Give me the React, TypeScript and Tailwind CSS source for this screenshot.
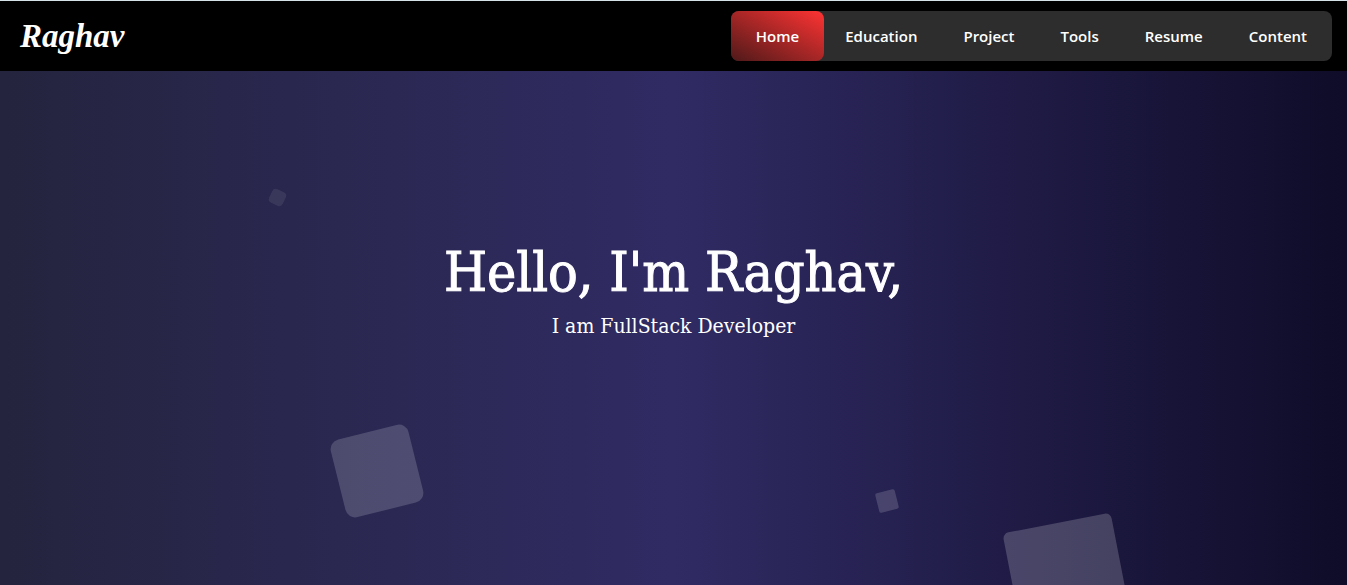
const links = ["Home", "Education", "Project", "Tools", "Resume", "Content"];

const squares = [
  "left-[270px] top-[119px] size-[15px] rotate-[25deg] rounded-[4px] bg-white/8",
  "left-[337px] top-[360px] size-20 -rotate-[14deg] rounded-[10px] bg-white/17",
  "left-[877px] top-[420px] size-5 -rotate-[14deg] rounded-[2px] bg-white/16",
  "left-[1012px] top-[451px] size-[110px] -rotate-[11deg] rounded-[6px] bg-white/19",
];

function Header() {
  return (
    <header className="flex h-[71px] shrink-0 items-center justify-between border-t border-[#d5e3e8] bg-black pr-[15px] pl-5">
      <a
        href="#home"
        className="font-['Liberation_Serif',cursive] text-[33px] leading-10 font-bold text-white italic"
      >
        Raghav
      </a>
      <nav
        aria-label="Main"
        className="flex h-[50px] -space-x-1 rounded-lg bg-[#2d2d2d] font-['Open_Sans',sans-serif] text-[15px] font-semibold text-white"
      >
        {links.map((label, i) => (
          <a
            key={label}
            href={`#${label.toLowerCase()}`}
            aria-current={i === 0 ? "page" : undefined}
            className={
              i === 0
                ? "flex items-center rounded-lg bg-linear-to-tr/srgb from-[#4f1919] to-[#ff3333] px-[25px]"
                : "flex items-center px-[25px]"
            }
          >
            {label}
          </a>
        ))}
      </nav>
    </header>
  );
}

export default function App() {
  return (
    <div className="flex min-h-screen flex-col">
      <Header />
      <main
        id="home"
        className="relative flex grow flex-col items-center overflow-hidden bg-linear-to-r/srgb from-[#24243e] via-[#302b63] to-[#0f0c29] px-4 pt-[167px] text-center font-['DejaVu_Serif_Condensed','DejaVu_Serif',serif] text-white"
      >
        {squares.map((square) => (
          <span key={square} aria-hidden="true" className={`absolute ${square}`} />
        ))}
        <h1 className="relative text-[55px] leading-[68px] [-webkit-text-stroke:1px]">
          Hello, I'm Raghav,
        </h1>
        <p className="relative mt-1 text-[21px] leading-8">I am FullStack Developer</p>
      </main>
    </div>
  );
}
